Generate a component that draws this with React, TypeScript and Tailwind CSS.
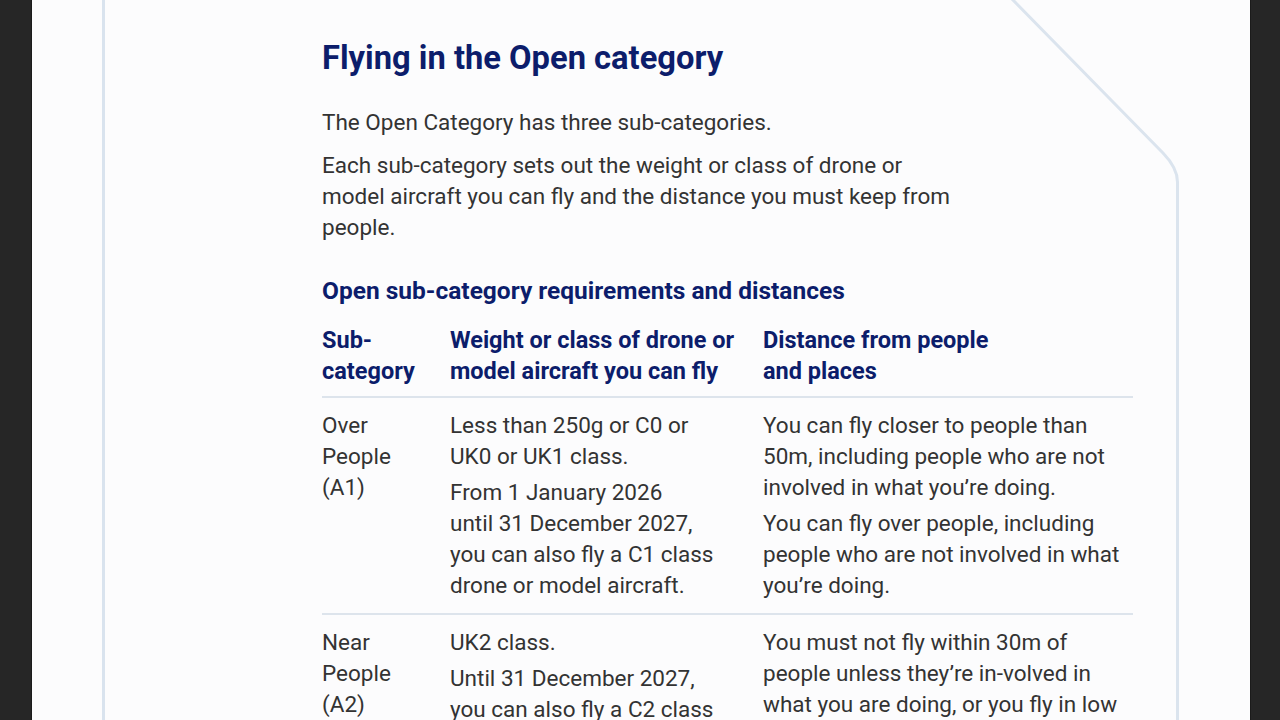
import type { ReactNode } from 'react'

const NAVY = 'text-[#0c1d6b]'

interface Row {
  name: ReactNode
  weight: ReactNode[]
  distance: ReactNode[]
}

const ROWS: Row[] = [
  {
    name: (
      <>
        Over
        <br />
        People
        <br />
        (A1)
      </>
    ),
    weight: [
      <>
        Less than 250g or C0 or
        <br />
        UK0 or UK1 class.
      </>,
      <>
        From 1 January 2026
        <br />
        until 31 December 2027,
        <br />
        you can also fly a C1 class
        <br />
        drone or model aircraft.
      </>,
    ],
    distance: [
      <>
        You can fly closer to people than
        <br />
        50m, including people who are not
        <br />
        involved in what you’re doing.
      </>,
      <>
        You can fly over people, including
        <br />
        people who are not involved in what
        <br />
        you’re doing.
      </>,
    ],
  },
  {
    name: (
      <>
        Near
        <br />
        People
        <br />
        (A2)
      </>
    ),
    weight: [
      <>UK2 class.</>,
      <>
        Until 31 December 2027,
        <br />
        you can also fly a C2 class
        <br />
        drone or model aircraft.
      </>,
    ],
    distance: [
      <>
        You must not fly within 30m of
        <br />
        people unless they’re in-volved in
        <br />
        what you are doing, or you fly in low
        <br />
        speed mode.
      </>,
    ],
  },
]

export default function App() {
  return (
    <div className="h-screen overflow-hidden bg-[#262626] font-['Roboto',sans-serif]">
      <div className="ml-[31px] h-full w-[1220px] border-x border-[#1b1b1b] bg-[#fcfcfd]">
        <div className="relative ml-[70px] h-full w-[1077px] border-l-[3px] border-[#d9e3ee] pl-[217px] pt-[38px]">
          {/* cut corner + right edge of the card */}
          <svg
            className="pointer-events-none absolute right-0 top-0"
            width="170"
            height="720"
            viewBox="0 0 170 720"
            fill="none"
          >
            <path
              d="M2 -2 L154 153 Q168.5 168 168.5 182 L168.5 722"
              stroke="#dbe4ee"
              strokeWidth="3"
            />
          </svg>

          <h1 className={`text-[32.7px] font-bold leading-[41px] ${NAVY}`}>
            Flying in the Open category
          </h1>

          <div className="mt-[28px] text-[22.5px] leading-[31px] text-[#333333]">
            <p>The Open Category has three sub-categories.</p>
            <p className="mt-[12px]">
              Each sub-category sets out the weight or class of drone or
              <br />
              model aircraft you can fly and the distance you must keep from
              <br />
              people.
            </p>
          </div>

          <h2 className={`mt-[33px] text-[24.5px] font-bold leading-[30px] ${NAVY}`}>
            Open sub-category requirements and distances
          </h2>

          <table className="mt-[19px] w-[811px] table-fixed border-collapse text-left text-[22.5px] leading-[31px]">
            <colgroup>
              <col className="w-[128px]" />
              <col className="w-[313px]" />
              <col className="w-[370px]" />
            </colgroup>
            <thead>
              <tr className={`border-b-2 border-[#dde4ec] text-[23.5px] ${NAVY}`}>
                <th className="pb-[9px] pr-[16px] align-top font-bold">
                  Sub-
                  <br />
                  category
                </th>
                <th className="pb-[9px] pr-[16px] align-top font-bold">
                  Weight or class of drone or
                  <br />
                  model aircraft you can fly
                </th>
                <th className="pb-[9px] align-top font-bold">
                  Distance from people
                  <br />
                  and places
                </th>
              </tr>
            </thead>
            <tbody className="text-[#333333]">
              {ROWS.map((row, i) => (
                <tr key={i} className="border-b-2 border-[#dde4ec]">
                  <td className="py-3 pr-[16px] align-top">{row.name}</td>
                  <td className="py-3 pr-[16px] align-top">
                    {row.weight.map((p, j) => (
                      <p key={j} className={j > 0 ? 'mt-[5px]' : ''}>
                        {p}
                      </p>
                    ))}
                  </td>
                  <td className="py-3 align-top">
                    {row.distance.map((p, j) => (
                      <p key={j} className={j > 0 ? 'mt-[5px]' : ''}>
                        {p}
                      </p>
                    ))}
                  </td>
                </tr>
              ))}
            </tbody>
          </table>
        </div>
      </div>
    </div>
  )
}
